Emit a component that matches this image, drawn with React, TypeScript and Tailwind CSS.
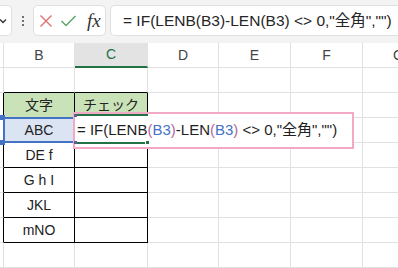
import React from "react";

const cols = [
  { w: "w-[4px]", label: "" },
  { w: "w-[71px]", label: "B" },
  { w: "w-[73px]", label: "C" },
  { w: "w-[71px]", label: "D" },
  { w: "w-[72px]", label: "E" },
  { w: "w-[72px]", label: "F" },
  { w: "w-[72px]", label: "G" },
];

const data: [string, string][] = [
  ["", ""],
  ["文字", "チェック"],
  ["ABC", ""],
  ["DE f", ""],
  ["G h I", ""],
  ["JKL", ""],
  ["mNO", ""],
  ["", ""],
];

function Cell({
  w,
  right,
  bottom,
  bg,
  children,
}: {
  w: string;
  right: string;
  bottom: string;
  bg?: string;
  children?: React.ReactNode;
}) {
  return (
    <div
      className={`${w} shrink-0 h-full border-r border-b flex items-center justify-center text-[14px] text-[#222] ${right} ${bottom} ${bg ?? ""}`}
    >
      {children}
    </div>
  );
}

export default function App() {
  const font = { fontFamily: '"Liberation Sans", "Noto Sans CJK JP", sans-serif' };
  return (
    <div className="w-[398px] h-[268px] overflow-hidden bg-white relative" style={font}>
      {/* toolbar */}
      <div className="h-[43px] bg-[#f3f3f3] flex items-start pt-[5px]">
        <div className="w-[12px] h-[31px] bg-white border border-[#e0e0e0] rounded-r-[5px] border-l-0 flex items-center justify-start">
          <svg width="8" height="6" viewBox="0 0 8 6" className="ml-[-1px]">
            <path d="M1 1.5 L4 4.5 L7 1.5" fill="none" stroke="#333" strokeWidth="1.4" />
          </svg>
        </div>
        <div className="w-[21px] h-[31px] flex flex-col items-center justify-center gap-[2px]">
          <div className="w-[2px] h-[2px] bg-[#444] rounded-full" />
          <div className="w-[2px] h-[2px] bg-[#444] rounded-full" />
          <div className="w-[2px] h-[2px] bg-[#444] rounded-full" />
        </div>
        <div className="w-[73px] h-[31px] bg-white border border-[#e0e0e0] rounded-[5px] flex items-center">
          <svg width="14" height="14" viewBox="0 0 14 14" className="ml-[5px]">
            <path d="M1.5 1.5 L12.5 12.5 M12.5 1.5 L1.5 12.5" stroke="#e07070" strokeWidth="1.4" fill="none" />
          </svg>
          <svg width="17" height="14" viewBox="0 0 17 14" className="ml-[7px]">
            <path d="M1.5 7 L6 11.5 L15.5 2" stroke="#5aa66a" strokeWidth="1.5" fill="none" />
          </svg>
          <span
            className="ml-[10px] italic text-[19px] text-[#333] leading-none"
            style={{ fontFamily: '"Liberation Serif", serif' }}
          >
            fx
          </span>
        </div>
        <div className="ml-[4px] flex-1 h-[31px] bg-white border border-[#e0e0e0] border-r-0 rounded-l-[5px] flex items-center pl-[12px]">
          <span className="text-[15.5px] text-[#262626] whitespace-nowrap">
            = IF(LENB(B3)-LEN(B3) &lt;&gt; 0,"全角","")
          </span>
        </div>
      </div>

      {/* grid */}
      <div className="relative">
        {/* column header */}
        <div className="h-[25px] flex">
          {cols.map((c, i) => (
            <div
              key={i}
              className={`${c.w} shrink-0 h-full border-r border-b border-[#e1e1e1] flex items-center justify-center text-[14px] ${
                i === 2 ? "bg-[#e3e3e3] text-[#217346] border-b-2 border-b-[#217346]" : "text-[#444]"
              }`}
            >
              {c.label}
            </div>
          ))}
        </div>
        {data.map((row, r) => {
          const inTable = r >= 1 && r <= 6;
          const aboveTable = r === 0;
          return (
            <div key={r} className="h-[25px] flex">
              {cols.map((c, i) => {
                const tableCol = i === 1 || i === 2;
                let right = "border-r-[#e1e1e1]";
                let bottom = "border-b-[#e1e1e1]";
                if (i === 0 && inTable) right = "border-r-black";
                if (tableCol && inTable) {
                  right = "border-r-black";
                  bottom = "border-b-black";
                }
                if (tableCol && aboveTable) bottom = "border-b-black";
                let bg = "";
                if (r === 1 && tableCol) bg = "bg-[#c9e2b8]";
                if (r === 2 && i === 1) bg = "bg-[#dbe4f3]";
                const txt = i === 1 ? row[0] : i === 2 ? row[1] : "";
                return (
                  <Cell key={i} w={c.w} right={right} bottom={bottom} bg={bg}>
                    {txt}
                  </Cell>
                );
              })}
            </div>
          );
        })}

        {/* blue reference box around B3 */}
        <div className="absolute left-[3px] top-[74px] w-[72px] h-[26px] border-2 border-[#4472c4]" />
        <div className="absolute left-[0px] top-[72px] w-[5px] h-[5px] bg-[#4472c4]" />
        <div className="absolute left-[0px] top-[97px] w-[5px] h-[5px] bg-[#4472c4]" />

        {/* pink annotation box with formula */}
        <div className="absolute left-[73px] top-[69px] w-[281px] h-[37px] border-2 border-[#f2a9c6] bg-white flex items-center pl-[2px]">
          <span className="text-[15px] text-[#1e1e1e] whitespace-nowrap">
            = IF(LENB<span className="text-[#b8679a]">(</span>
            <span className="text-[#4472c4]">B3</span>
            <span className="text-[#b8679a]">)</span>-LEN<span className="text-[#b8679a]">(</span>
            <span className="text-[#4472c4]">B3</span>
            <span className="text-[#b8679a]">)</span> &lt;&gt; 0,"全角","")
          </span>
        </div>
        {/* green active cell lines */}
        <div className="absolute left-[75px] top-[71px] w-[73px] h-[2px] bg-[#217346]" />
        <div className="absolute left-[75px] top-[99px] w-[73px] h-[2px] bg-[#217346]" />
        <div className="absolute left-[145px] top-[97px] w-[5px] h-[5px] bg-[#217346] border border-white" />
        <div className="absolute left-[74px] top-[71px] w-[3px] h-[3px] bg-[#6a5a9a]" />
        <div className="absolute left-[74px] top-[98px] w-[3px] h-[3px] bg-[#6a5a9a]" />
      </div>
    </div>
  );
}
